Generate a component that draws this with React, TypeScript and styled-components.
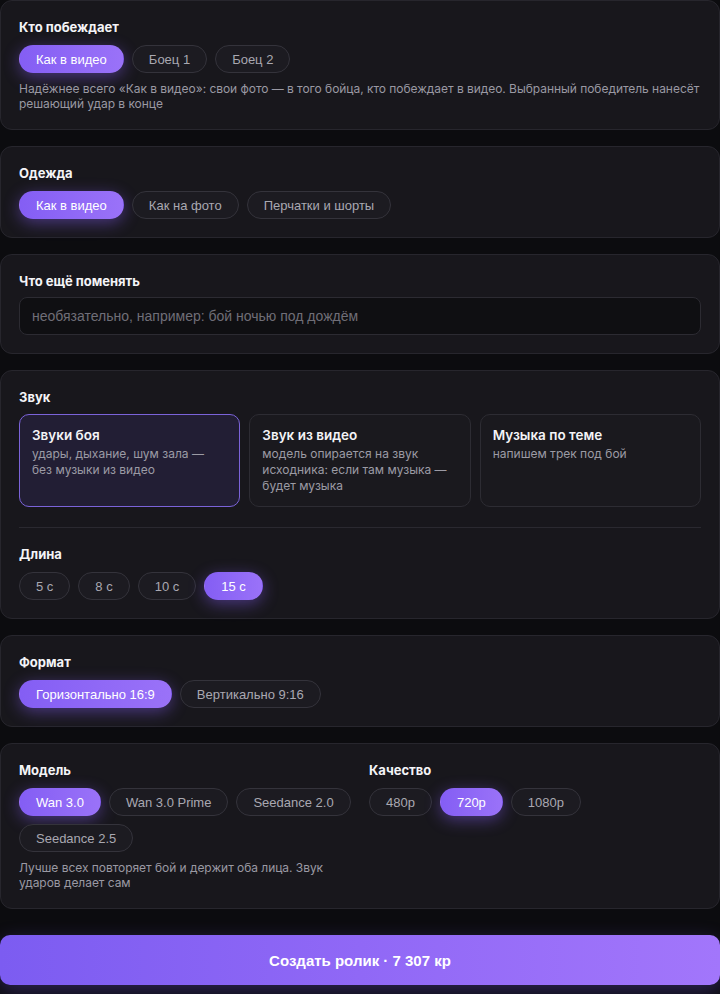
import React, { useState } from "react";
import styled, { createGlobalStyle, css } from "styled-components";

const GlobalStyle = createGlobalStyle`
  html, body {
    margin: 0;
    padding: 0;
    background: #0c0c0f;
  }
  body {
    font-family: Inter, "Noto Sans", sans-serif;
    color: #f2f2f5;
    -webkit-font-smoothing: antialiased;
  }
  * { box-sizing: border-box; }
`;

const Page = styled.div`
  display: flex;
  flex-direction: column;
  gap: 16px;
  width: 720px;
`;

const Card = styled.section`
  background: #18171c;
  border: 1px solid #27262d;
  border-radius: 12px;
  padding: 18px;
  display: flex;
  flex-direction: column;
`;

const Title = styled.h3<{ $gap?: number }>`
  margin: 0 0 ${(p) => p.$gap ?? 10}px;
  font-size: 13px;
  line-height: 16px;
  font-weight: 700;
  color: #f4f4f7;
`;

const ChipRow = styled.div`
  display: flex;
  flex-wrap: wrap;
  gap: 8px;
`;

const Chip = styled.button<{ $active?: boolean }>`
  height: 28px;
  padding: 0 16px;
  border-radius: 14px;
  font-family: "Liberation Sans", Arial, sans-serif;
  font-size: 13px;
  cursor: pointer;
  border: 1px solid #34333b;
  background: #1c1b21;
  color: #a9a8b1;
  white-space: nowrap;
  ${(p) =>
    p.$active &&
    css`
      border-color: transparent;
      background: linear-gradient(90deg, #845ef4, #9a72f8);
      color: #ffffff;
      box-shadow: 0 4px 16px rgba(132, 94, 244, 0.45);
    `}
`;

const Hint = styled.p`
  margin: 8px 0 0;
  font-size: 12px;
  line-height: 15px;
  letter-spacing: -0.04px;
  color: #9a99a3;
`;

const Field = styled.input`
  height: 38px;
  width: 100%;
  border-radius: 8px;
  border: 1px solid #2c2b32;
  background: #0f0f12;
  padding: 0 12px;
  font-family: "Liberation Sans", Arial, sans-serif;
  font-size: 14px;
  color: #e8e8ec;
  outline: none;
  &::placeholder {
    color: #6f6e77;
  }
`;

const SoundGrid = styled.div`
  display: grid;
  grid-template-columns: repeat(3, 1fr);
  gap: 9px;
`;

const SoundOption = styled.button<{ $active?: boolean }>`
  text-align: left;
  display: flex;
  flex-direction: column;
  align-items: flex-start;
  justify-content: flex-start;
  padding: 12px 14px 12px 12px;
  border-radius: 10px;
  border: 1px solid #2d2c33;
  background: #1a191e;
  cursor: pointer;
  font-family: Inter, "Noto Sans", sans-serif;
  min-height: 93px;
  ${(p) =>
    p.$active &&
    css`
      border-color: #7b63d9;
      background: #221e34;
    `}
`;

const SoundName = styled.span`
  font-size: 13.5px;
  line-height: 16px;
  font-weight: 600;
  color: #f4f4f7;
`;

const SoundDesc = styled.span`
  margin-top: 3px;
  font-size: 12px;
  line-height: 16px;
  color: #9c9ba5;
`;

const Divider = styled.hr`
  border: none;
  border-top: 1px solid #2a2930;
  margin: 20px 0 18px;
`;

const Columns = styled.div`
  display: grid;
  grid-template-columns: 1fr 1fr;
  gap: 18px;
`;

const Column = styled.div`
  display: flex;
  flex-direction: column;
`;

const Footer = styled.div`
  padding-top: 26px;
  padding-bottom: 9px;
`;

const Submit = styled.button`
  width: 100%;
  height: 50px;
  border: none;
  border-radius: 10px;
  background: linear-gradient(90deg, #7c5cf1 0%, #9068f6 50%, #a276fb 100%);
  color: #ffffff;
  font-family: "Liberation Sans", Arial, sans-serif;
  font-weight: 700;
  font-size: 15px;
  cursor: pointer;
  box-shadow: 0 6px 20px rgba(124, 92, 241, 0.3);
`;

type Opt = { id: string; label: string };

function Chips({
  options,
  value,
  onChange,
}: {
  options: Opt[];
  value: string;
  onChange: (v: string) => void;
}) {
  return (
    <ChipRow>
      {options.map((o) => (
        <Chip key={o.id} $active={o.id === value} onClick={() => onChange(o.id)}>
          {o.label}
        </Chip>
      ))}
    </ChipRow>
  );
}

const sounds = [
  { id: "fight", name: "Звуки боя", desc: "удары, дыхание, шум зала — без музыки из видео" },
  { id: "video", name: "Звук из видео", desc: "модель опирается на звук исходника: если там музыка — будет музыка" },
  { id: "music", name: "Музыка по теме", desc: "напишем трек под бой" },
];

export default function App() {
  const [winner, setWinner] = useState("video");
  const [outfit, setOutfit] = useState("video");
  const [sound, setSound] = useState("fight");
  const [length, setLength] = useState("15");
  const [format, setFormat] = useState("h");
  const [model, setModel] = useState("wan3");
  const [quality, setQuality] = useState("720");

  return (
    <>
      <GlobalStyle />
      <Page>
        <Card>
          <Title>Кто побеждает</Title>
          <Chips
            value={winner}
            onChange={setWinner}
            options={[
              { id: "video", label: "Как в видео" },
              { id: "f1", label: "Боец 1" },
              { id: "f2", label: "Боец 2" },
            ]}
          />
          <Hint>
            Надёжнее всего «Как в видео»: свои фото — в того бойца, кто побеждает в видео. Выбранный победитель
            нанесёт решающий удар в конце
          </Hint>
        </Card>

        <Card>
          <Title>Одежда</Title>
          <Chips
            value={outfit}
            onChange={setOutfit}
            options={[
              { id: "video", label: "Как в видео" },
              { id: "photo", label: "Как на фото" },
              { id: "gloves", label: "Перчатки и шорты" },
            ]}
          />
        </Card>

        <Card>
          <Title $gap={8}>Что ещё поменять</Title>
          <Field placeholder="необязательно, например: бой ночью под дождём" />
        </Card>

        <Card>
          <Title $gap={9}>Звук</Title>
          <SoundGrid>
            {sounds.map((s) => (
              <SoundOption key={s.id} $active={s.id === sound} onClick={() => setSound(s.id)}>
                <SoundName>{s.name}</SoundName>
                <SoundDesc>{s.desc}</SoundDesc>
              </SoundOption>
            ))}
          </SoundGrid>
          <Divider />
          <Title>Длина</Title>
          <Chips
            value={length}
            onChange={setLength}
            options={[
              { id: "5", label: "5 с" },
              { id: "8", label: "8 с" },
              { id: "10", label: "10 с" },
              { id: "15", label: "15 с" },
            ]}
          />
        </Card>

        <Card>
          <Title>Формат</Title>
          <Chips
            value={format}
            onChange={setFormat}
            options={[
              { id: "h", label: "Горизонтально 16:9" },
              { id: "v", label: "Вертикально 9:16" },
            ]}
          />
        </Card>

        <Card>
          <Columns>
            <Column>
              <Title>Модель</Title>
              <Chips
                value={model}
                onChange={setModel}
                options={[
                  { id: "wan3", label: "Wan 3.0" },
                  { id: "wan3p", label: "Wan 3.0 Prime" },
                  { id: "sd2", label: "Seedance 2.0" },
                  { id: "sd25", label: "Seedance 2.5" },
                ]}
              />
              <Hint>Лучше всех повторяет бой и держит оба лица. Звук ударов делает сам</Hint>
            </Column>
            <Column>
              <Title>Качество</Title>
              <Chips
                value={quality}
                onChange={setQuality}
                options={[
                  { id: "480", label: "480p" },
                  { id: "720", label: "720p" },
                  { id: "1080", label: "1080p" },
                ]}
              />
            </Column>
          </Columns>
        </Card>
      </Page>
      <Footer>
        <Submit>Создать ролик · 7 307 кр</Submit>
      </Footer>
    </>
  );
}
